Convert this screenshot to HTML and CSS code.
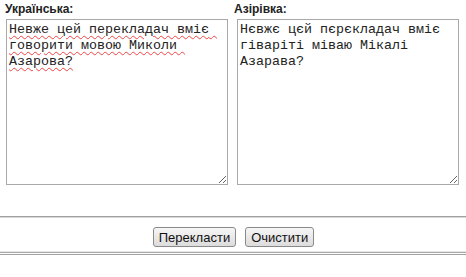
FILE: index.html
```html
<!DOCTYPE html>
<html lang="uk">
<head>
  <meta charset="UTF-8">
  <title>Перекладач</title>
  <link rel="stylesheet" href="styles.css">
</head>
<body>
  <div class="panes">
    <div class="pane pane-src">
      <label for="src">Українська:</label>
      <textarea id="src" class="src" spellcheck="false">Невже цей перекладач вміє говорити мовою Миколи Азарова?</textarea>
    </div>
    <div class="pane pane-dst">
      <label for="dst">Азірівка:</label>
      <textarea id="dst" spellcheck="false">Нєвжє цєй пєрєкладач вміє гіваріті міваю Мікалі Азарава?</textarea>
    </div>
  </div>

  <div class="actions">
    <button>Перекласти</button>
    <button>Очистити</button>
  </div>
  <div class="footer"></div>
</body>
</html>
```

FILE: styles.css
```css
body {
  margin: 0;
  font-family: "Liberation Sans", Arial, sans-serif;
  background: #fff;
  color: #000;
}
.panes {
  display: flex;
  padding: 2px 0 0 5px;
  height: 214px;
  border-bottom: 1px solid #a0a0a0;
  box-shadow: 0 1px 0 #d8d8d8;
}
.pane label {
  display: block;
  font-size: 12px;
  font-weight: bold;
  line-height: 14px;
  color: #222;
  margin-bottom: 3px;
}
.pane-src { width: 229px; }
.pane-src textarea { margin-left: 1px; }
.pane-dst textarea { margin-left: 3px; }
textarea {
  display: block;
  box-sizing: border-box;
  width: 222px;
  height: 166px;
  margin: 0;
  padding: 2px;
  border: 1px solid #a9a9a9;
  font-family: "Liberation Mono", "Courier New", monospace;
  font-size: 13.33px;
  line-height: 16px;
  color: #222;
  resize: both;
  outline: none;
}
textarea.src {
  text-decoration: underline wavy #e44;
  text-decoration-thickness: 1px;
  text-underline-offset: 2px;
}
.actions {
  display: flex;
  justify-content: center;
  gap: 9px;
  padding: 10px 0 3px;
  height: 20px;
  margin-left: 1px;
}
button {
  font-family: "Liberation Sans", Arial, sans-serif;
  font-size: 13px;
  height: 20px;
  padding: 0 5px;
  color: #111;
  background: linear-gradient(#f6f6f6, #dcdcdc);
  border: 1px solid #8a8a8a;
  border-radius: 3px;
  cursor: pointer;
}
.footer {
  height: 2px;
  margin-top: 1px;
  border-top: 1px solid #e6e6e6;
  border-bottom: 1px solid #a0a0a0;
  box-shadow: inset 0 1px 0 #a8a8a8, 0 2px 0 #c8c8c8;
}
```
